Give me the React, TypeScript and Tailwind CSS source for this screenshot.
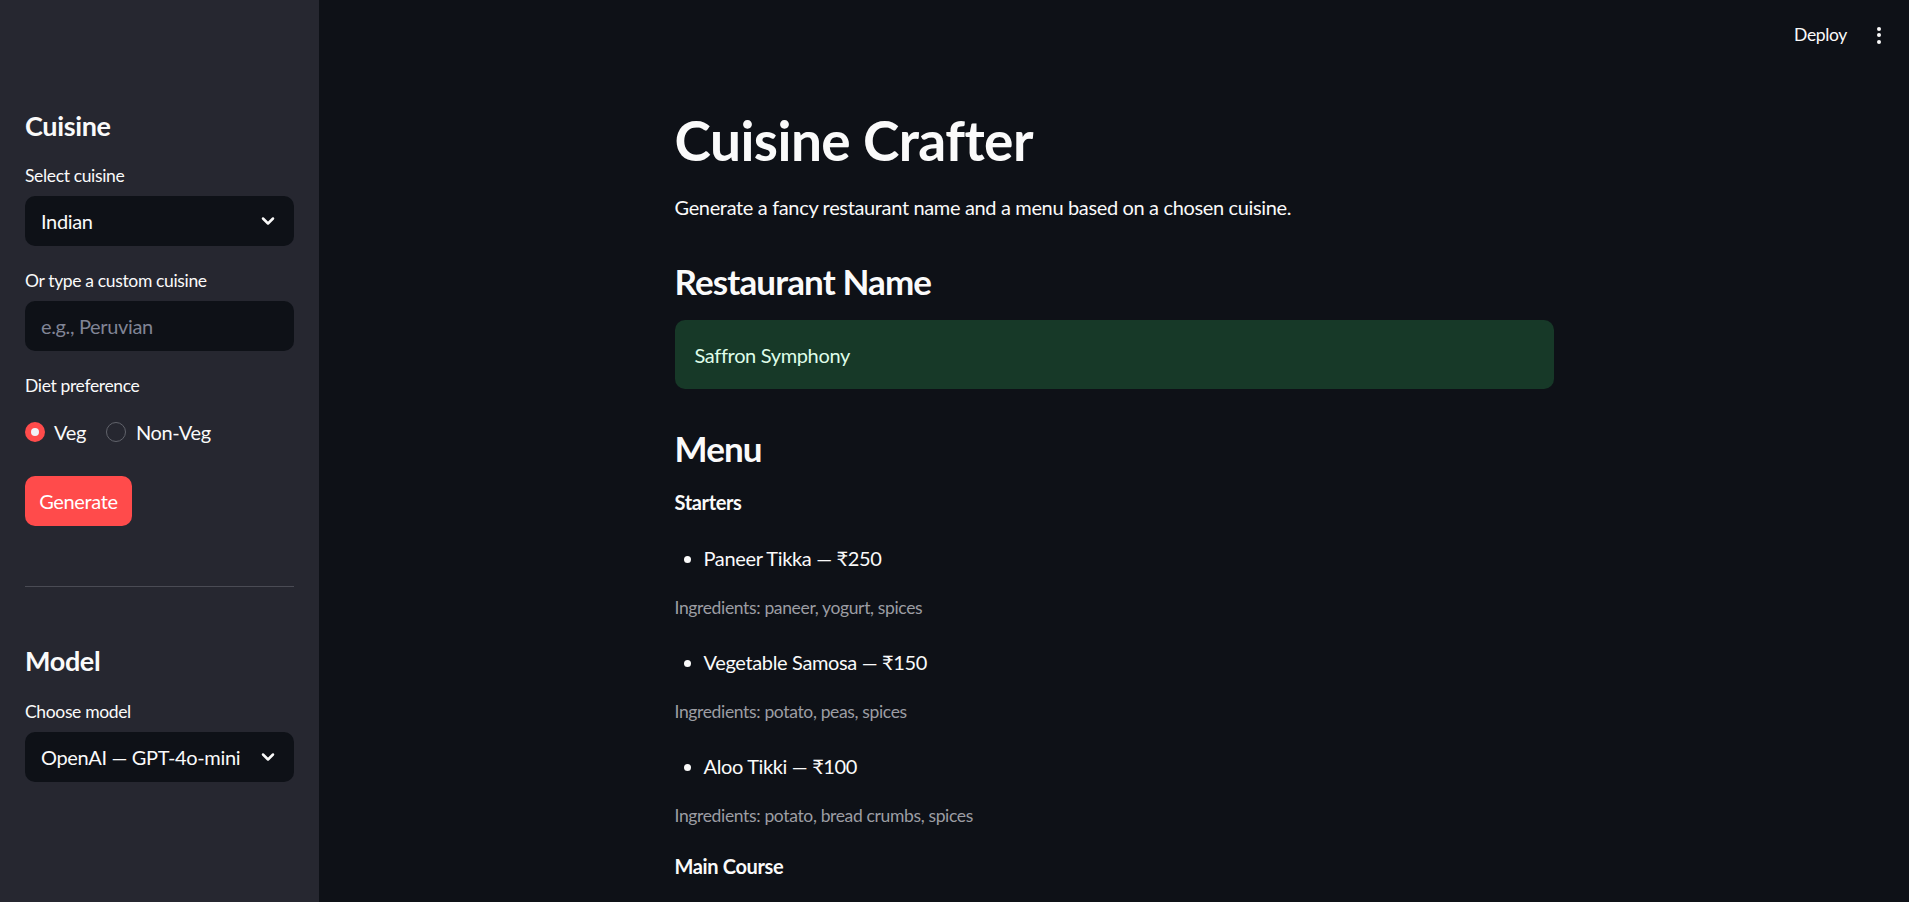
import { ChevronDown } from "lucide-react";

const starters = [
  { name: "Paneer Tikka", price: "₹250", ingredients: "paneer, yogurt, spices" },
  { name: "Vegetable Samosa", price: "₹150", ingredients: "potato, peas, spices" },
  { name: "Aloo Tikki", price: "₹100", ingredients: "potato, bread crumbs, spices" },
];

function SelectBox({ value }: { value: string }) {
  return (
    <div className="h-[50px] w-full rounded-[10px] bg-[#0e1117] flex items-center justify-between px-4 text-[20px] text-[#fafafa]">
      <span>{value}</span>
      <ChevronDown size={20} strokeWidth={3} className="text-[#fafafa]" />
    </div>
  );
}

function Sidebar() {
  return (
    <aside className="w-[319px] shrink-0 h-full bg-[#262730] px-[25px] pt-[110px] flex flex-col text-[#fafafa]">
      <h2 className="text-[27px] leading-[32px] font-bold">Cuisine</h2>
      <label className="mt-[23px] text-[17.5px] leading-[22px]">Select cuisine</label>
      <div className="mt-[9px]">
        <SelectBox value="Indian" />
      </div>
      <label className="mt-[24px] text-[17.5px] leading-[22px]">Or type a custom cuisine</label>
      <div className="mt-[9px] h-[50px] rounded-[10px] bg-[#0e1117] flex items-center px-4 text-[20px] text-[#808495]">
        e.g., Peruvian
      </div>
      <label className="mt-[24px] text-[17.5px] leading-[22px]">Diet preference</label>
      <div className="mt-[23px] h-[24px] flex items-center gap-[20px] text-[20px]">
        <div className="flex items-center gap-[9px]">
          <span className="w-[20px] h-[20px] rounded-full bg-[#ff4b4b] flex items-center justify-center">
            <span className="w-[8px] h-[8px] rounded-full bg-[#f0f2f6]" />
          </span>
          <span>Veg</span>
        </div>
        <div className="flex items-center gap-[10px]">
          <span className="w-[20px] h-[20px] rounded-full border-[1.5px] border-[#61636b]" />
          <span>Non-Veg</span>
        </div>
      </div>
      <button className="mt-[32px] self-start h-[50px] w-[107px] rounded-[10px] bg-[#ff4b4b] text-[20px] text-white">
        Generate
      </button>
      <div className="mt-[60px] h-px bg-[#4a4b54]" />
      <h2 className="mt-[58px] text-[27px] leading-[32px] font-bold">Model</h2>
      <label className="mt-[24px] text-[17.5px] leading-[22px]">Choose model</label>
      <div className="mt-[9px]">
        <SelectBox value="OpenAI — GPT-4o-mini" />
      </div>
    </aside>
  );
}

export default function App() {
  return (
    <div className="h-screen w-full flex overflow-hidden font-['Lato',sans-serif] tracking-[-0.022em] bg-[#0e1117]">
      <Sidebar />
      <main className="flex-1 h-full overflow-hidden flex flex-col text-[#fafafa]">
        <header className="h-[70px] shrink-0 flex items-center justify-end pr-[28px] gap-[30px]">
          <span className="text-[17.5px]">Deploy</span>
          <span className="flex flex-col gap-[2.5px] items-center">
            <span className="w-[4px] h-[4px] rounded-full bg-[#fafafa]" />
            <span className="w-[4px] h-[4px] rounded-full bg-[#fafafa]" />
            <span className="w-[4px] h-[4px] rounded-full bg-[#fafafa]" />
          </span>
        </header>
        <div className="w-[879px] mx-auto flex flex-col">
          <h1 className="mt-[37px] text-[55px] leading-[66px] font-bold tracking-[-0.01em]">Cuisine Crafter</h1>
          <p className="mt-[18px] text-[20px] leading-[32px]">
            Generate a fancy restaurant name and a menu based on a chosen cuisine.
          </p>
          <h3 className="mt-[37px] text-[35px] leading-[42px] font-bold tracking-[-0.025em]">Restaurant Name</h3>
          <div className="mt-[18px] h-[69px] rounded-[10px] bg-[#173928] flex items-center px-[20px] text-[20px] text-[#dffde9]">
            Saffron Symphony
          </div>
          <h3 className="mt-[38px] text-[35px] leading-[42px] font-bold tracking-[-0.025em]">Menu</h3>
          <p className="mt-[17px] text-[20px] leading-[32px] font-bold">Starters</p>
          {starters.map((it) => (
            <div key={it.name} className="flex flex-col">
              <ul className="mt-[24px] list-disc pl-[29px] text-[20px] leading-[32px]">
                <li>
                  {it.name} — {it.price}
                </li>
              </ul>
              <p className="mt-[20px] text-[17.5px] leading-[28px] text-[#9c9da3]">
                Ingredients: {it.ingredients}
              </p>
            </div>
          ))}
          <p className="mt-[20px] text-[20px] leading-[32px] font-bold">Main Course</p>
        </div>
      </main>
    </div>
  );
}
